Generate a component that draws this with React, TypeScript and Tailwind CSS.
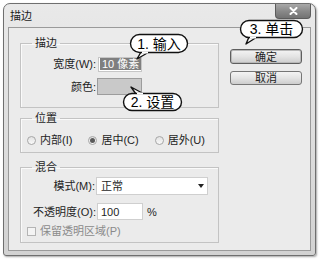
const font = "font-['Liberation_Sans','Noto_Sans_CJK_SC',sans-serif]";

function Radio({ checked }: { checked?: boolean }) {
  return (
    <span className="flex h-[9px] w-[9px] items-center justify-center rounded-full border border-[#a6a6a6] bg-gradient-to-b from-[#e2e2e2] to-[#fafafa]">
      {checked && <span className="h-[5px] w-[5px] rounded-full bg-[#5a5a5a]" />}
    </span>
  );
}

export default function App() {
  return (
    <div className={`relative h-[263px] w-[325px] overflow-hidden bg-white pl-[3px] pt-[3px] text-[11px] leading-[14px] text-[#1e1e1e] ${font}`}>
      {/* window */}
      <div className="flex h-[253px] w-[313px] flex-col rounded-t-[7px] rounded-b-[3px] border border-[#6f6f6f] bg-gradient-to-b from-[#e9e9e9] via-[#dedede] to-[#d2d2d2] shadow-[1px_1px_2px_rgba(0,0,0,0.35)]">
        <div className="flex h-[23px] shrink-0">
          <div className="pl-[6px] pt-[5px] text-[11px] text-[#222]">描边</div>
          <div className="ml-auto mr-[4px] flex h-[15px] w-[36px] items-center justify-center rounded-b-[4px] border border-t-0 border-[#5c5c5c] bg-gradient-to-b from-[#a9a9a9] via-[#8a8a8a] to-[#737373]">
            <svg width="9" height="8" viewBox="0 0 9 8">
              <path d="M1.5 1 L7.5 7 M7.5 1 L1.5 7" stroke="#fff" strokeWidth="2" strokeLinecap="round" />
            </svg>
          </div>
        </div>

        <div className="mx-[4px] mb-[4px] flex flex-1 border border-[#9a9a9a] bg-[#ebebeb] pl-[11px] pt-[8px]">
          {/* left column */}
          <div className="flex w-[199px] flex-col">
            <fieldset className="h-[72px] border border-[#c3c3c3] shadow-[inset_1px_1px_0_#fafafa]">
              <legend className="ml-[11px] px-[3px]">描边</legend>
              <div className="mt-[6px] flex h-[16px] items-center">
                <div className="w-[75px] text-right">宽度(W):</div>
                <div className="ml-[2px] flex h-[15px] w-[44px] items-center overflow-hidden whitespace-nowrap border border-[#c6c6c6] bg-white pl-[1px]">
                  <span className="bg-[#7f7f7f] px-[2px] leading-[12px] text-white">10 像素</span>
                </div>
              </div>
              <div className="mt-[6px] flex h-[17px] items-center">
                <div className="w-[75px] text-right">颜色:</div>
                <div className="ml-[1px] h-[17px] w-[45px] border border-[#9c9c9c] bg-[#c9c9c9]" />
              </div>
            </fieldset>

            <fieldset className="mt-[3px] h-[42px] border border-[#c3c3c3] shadow-[inset_1px_1px_0_#fafafa]">
              <legend className="ml-[11px] px-[3px]">位置</legend>
              <div className="mt-[8px] flex h-[14px] items-center pl-[6px]">
                <Radio />
                <span className="ml-[4px]">内部(I)</span>
                <span className="ml-[16px]"><Radio checked /></span>
                <span className="ml-[4px]">居中(C)</span>
                <span className="ml-[16px]"><Radio /></span>
                <span className="ml-[4px]">居外(U)</span>
              </div>
            </fieldset>

            <fieldset className="mt-[7px] h-[83px] border border-[#c3c3c3] shadow-[inset_1px_1px_0_#fafafa]">
              <legend className="ml-[11px] px-[3px]">混合</legend>
              <div className="mt-[3px] flex h-[18px] items-center">
                <div className="w-[74px] text-right">模式(M):</div>
                <div className="ml-[1px] flex h-[18px] w-[112px] items-center justify-between border border-[#cfcfcf] bg-white pl-[4px] pr-[3px]">
                  <span>正常</span>
                  <svg width="6" height="4" viewBox="0 0 6 4"><path d="M0 0 H6 L3 4 Z" fill="#222" /></svg>
                </div>
              </div>
              <div className="mt-[8px] flex h-[17px] items-center">
                <div className="w-[75px] text-right">不透明度(O):</div>
                <div className="ml-[1px] flex h-[17px] w-[46px] items-center border border-[#cfcfcf] bg-white pl-[3px]">100</div>
                <span className="ml-[4px]">%</span>
              </div>
              <div className="mt-[4px] flex h-[14px] items-center pl-[6px] text-[#8a8a8a]">
                <span className="h-[9px] w-[9px] border border-[#b4b4b4] bg-[#f4f4f4]" />
                <span className="ml-[4px]">保留透明区域(P)</span>
              </div>
            </fieldset>
          </div>

          {/* buttons */}
          <div className="ml-[11px] mt-[13px] flex w-[72px] flex-col gap-[7px]">
            <div className="flex h-[15px] items-center justify-center rounded-[3px] border border-[#5e5e5e] bg-gradient-to-b from-[#f4f4f4] via-[#e4e4e4] to-[#cdcdcd] shadow-[inset_0_0_0_1px_#b9b9b9]">确定</div>
            <div className="flex h-[14px] items-center justify-center rounded-[3px] border border-[#767676] bg-gradient-to-b from-[#f4f4f4] via-[#e4e4e4] to-[#cdcdcd]">取消</div>
          </div>
        </div>
      </div>

      {/* callouts */}
      <svg className="pointer-events-none absolute inset-0" width="325" height="263">
        <g stroke="#111" strokeWidth="1.4" fill="#fff" strokeLinejoin="round">
          <path d="M141 52 L137 59 L149 52 Z" />
          <rect x="130.5" y="34.5" width="57" height="18" rx="9" />
          <path d="M142 52.5 L148 52.5" stroke="#fff" strokeWidth="2" />

          <path d="M136 94 L131 87 L144 94 Z" />
          <rect x="123.5" y="93.5" width="58" height="17" rx="8.5" />
          <path d="M137 93.5 L143 93.5" stroke="#fff" strokeWidth="2" />

          <path d="M249 37 L246 44 L257 37 Z" />
          <rect x="240.5" y="20.5" width="62" height="17" rx="8.5" />
          <path d="M250 37.5 L256 37.5" stroke="#fff" strokeWidth="2" />
        </g>
      </svg>
      <div className="absolute left-[130px] top-[34px] flex h-[19px] w-[58px] items-center justify-center whitespace-nowrap text-[14px] text-black">1. 输入</div>
      <div className="absolute left-[123px] top-[93px] flex h-[18px] w-[59px] items-center justify-center whitespace-nowrap text-[14px] text-black">2. 设置</div>
      <div className="absolute left-[240px] top-[20px] flex h-[18px] w-[63px] items-center justify-center whitespace-nowrap text-[14px] text-black">3. 单击</div>
    </div>
  );
}
